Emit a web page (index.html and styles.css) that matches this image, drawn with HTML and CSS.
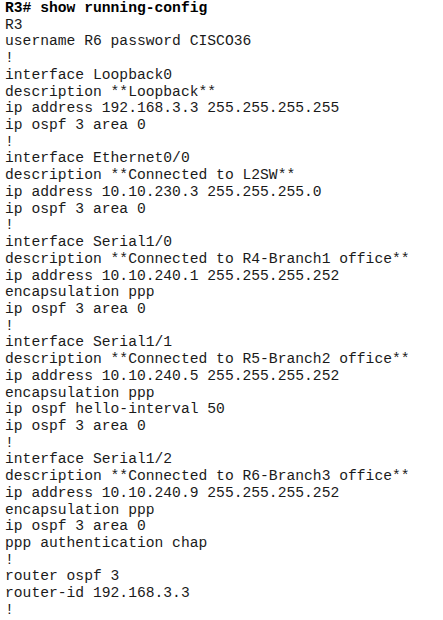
FILE: index.html
```html
<!DOCTYPE html>
<html>
<head>
<meta charset="utf-8">
<link rel="stylesheet" href="styles.css">
</head>
<body>
<pre class="config"><b class="prompt">R3# show running-config</b>
R3
username R6 password CISCO36
!
interface Loopback0
description **Loopback**
ip address 192.168.3.3 255.255.255.255
ip ospf 3 area 0
!
interface Ethernet0/0
description **Connected to L2SW**
ip address 10.10.230.3 255.255.255.0
ip ospf 3 area 0
!
interface Serial1/0
description **Connected to R4-Branch1 office**
ip address 10.10.240.1 255.255.255.252
encapsulation ppp
ip ospf 3 area 0
!
interface Serial1/1
description **Connected to R5-Branch2 office**
ip address 10.10.240.5 255.255.255.252
encapsulation ppp
ip ospf hello-interval 50
ip ospf 3 area 0
!
interface Serial1/2
description **Connected to R6-Branch3 office**
ip address 10.10.240.9 255.255.255.252
encapsulation ppp
ip ospf 3 area 0
ppp authentication chap
!
router ospf 3
router-id 192.168.3.3
!</pre>
</body>
</html>
```
FILE: styles.css
```css
html, body {
  margin: 0;
  padding: 0;
  background: #ffffff;
}
.config {
  margin: 0;
  padding: 0 0 0 5px;
  font-family: "Liberation Mono", "Courier New", monospace;
  font-size: 14.67px;
  line-height: 16.72px;
  color: #1a1a1a;
}
.prompt {
  font-weight: bold;
  color: #000000;
}
```
